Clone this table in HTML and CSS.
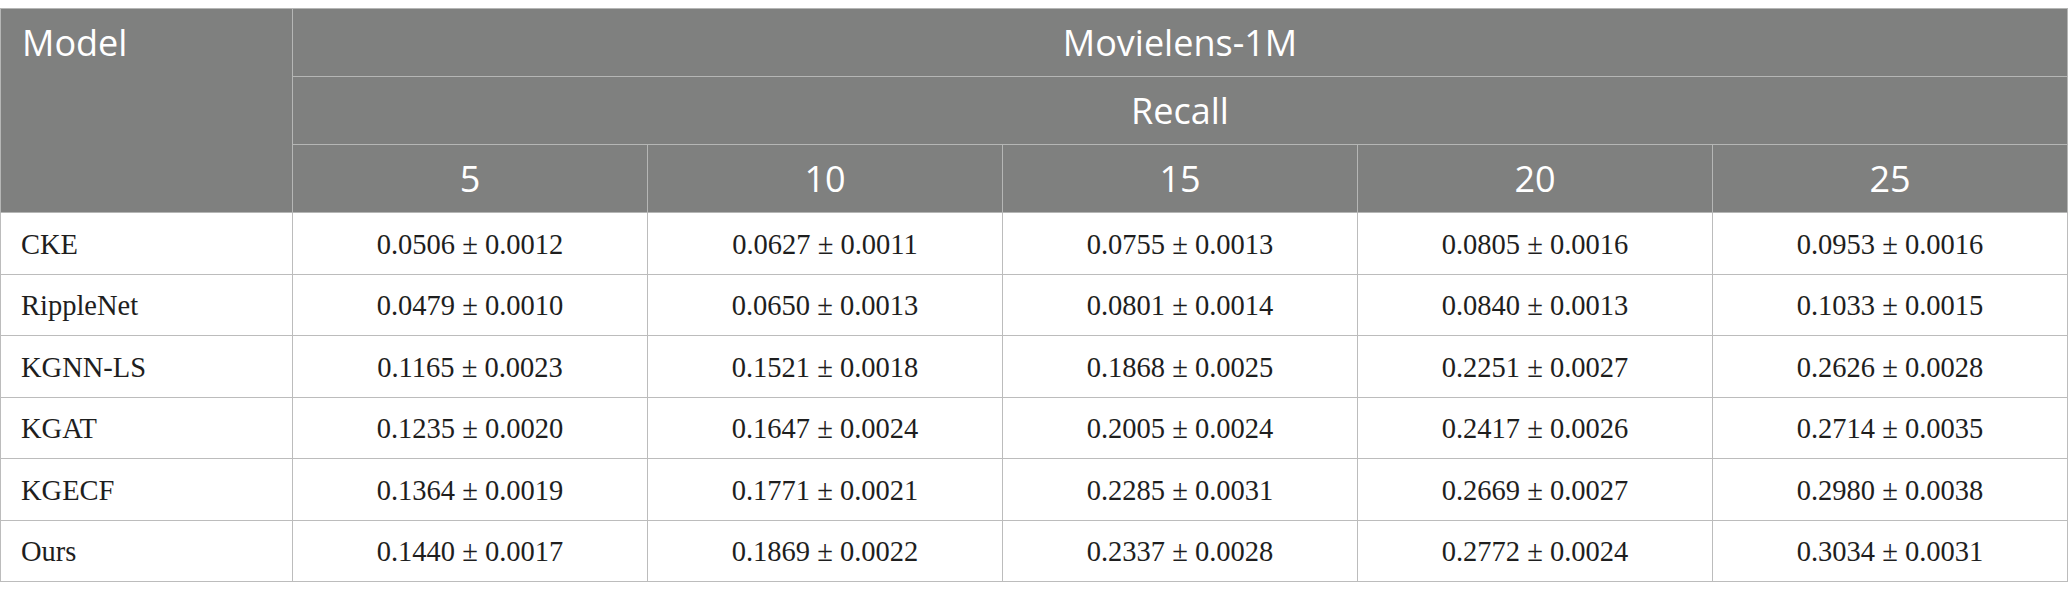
FILE: index.html
```html
<!DOCTYPE html>
<html>
<head>
<meta charset="utf-8">
<link rel="stylesheet" href="styles.css">
</head>
<body>
<table class="results">
  <colgroup>
    <col class="col-model">
    <col class="col-data"><col class="col-data"><col class="col-data"><col class="col-data"><col class="col-data">
  </colgroup>
  <thead>
    <tr class="hrow">
      <th class="model-head" rowspan="3">Model</th>
      <th colspan="5">Movielens-1M</th>
    </tr>
    <tr class="hrow">
      <th colspan="5">Recall</th>
    </tr>
    <tr class="hrow">
      <th>5</th><th>10</th><th>15</th><th>20</th><th>25</th>
    </tr>
  </thead>
  <tbody>
    <tr><td class="name">CKE</td><td>0.0506 ± 0.0012</td><td>0.0627 ± 0.0011</td><td>0.0755 ± 0.0013</td><td>0.0805 ± 0.0016</td><td>0.0953 ± 0.0016</td></tr>
    <tr><td class="name">RippleNet</td><td>0.0479 ± 0.0010</td><td>0.0650 ± 0.0013</td><td>0.0801 ± 0.0014</td><td>0.0840 ± 0.0013</td><td>0.1033 ± 0.0015</td></tr>
    <tr><td class="name">KGNN-LS</td><td>0.1165 ± 0.0023</td><td>0.1521 ± 0.0018</td><td>0.1868 ± 0.0025</td><td>0.2251 ± 0.0027</td><td>0.2626 ± 0.0028</td></tr>
    <tr><td class="name">KGAT</td><td>0.1235 ± 0.0020</td><td>0.1647 ± 0.0024</td><td>0.2005 ± 0.0024</td><td>0.2417 ± 0.0026</td><td>0.2714 ± 0.0035</td></tr>
    <tr><td class="name">KGECF</td><td>0.1364 ± 0.0019</td><td>0.1771 ± 0.0021</td><td>0.2285 ± 0.0031</td><td>0.2669 ± 0.0027</td><td>0.2980 ± 0.0038</td></tr>
    <tr><td class="name">Ours</td><td>0.1440 ± 0.0017</td><td>0.1869 ± 0.0022</td><td>0.2337 ± 0.0028</td><td>0.2772 ± 0.0024</td><td>0.3034 ± 0.0031</td></tr>
  </tbody>
</table>
</body>
</html>
```
FILE: styles.css
```css
html, body {
  margin: 0;
  padding: 0;
  background: #ffffff;
}
body {
  padding-top: 8px;
}
.results {
  border-collapse: collapse;
  table-layout: fixed;
  width: 2068px;
}
.col-model {
  width: 292px;
}
.col-data {
  width: 355px;
}
.results th {
  background: #7f807f;
  color: #ffffff;
  font-family: "Open Sans", "Noto Sans", sans-serif;
  font-weight: 400;
  font-size: 36px;
  line-height: 1.2;
  text-align: center;
  vertical-align: middle;
  border: 1px solid #b5b6b5;
  padding: 0 10px;
}
.hrow {
  height: 68px;
}
.results th.model-head {
  text-align: left;
  vertical-align: top;
  padding: 12px 22px 0 21px;
}
.results td {
  font-family: "Liberation Serif", "Times New Roman", serif;
  font-size: 28.5px;
  color: #1e1e1e;
  text-align: center;
  vertical-align: middle;
  border: 1px solid #bcbcbc;
  height: 58px;
  padding: 2px 10px 0 10px;
}
.results tbody tr:nth-child(odd) td {
  height: 59px;
}
.results td.name {
  text-align: left;
  padding-left: 20px;
}
```
